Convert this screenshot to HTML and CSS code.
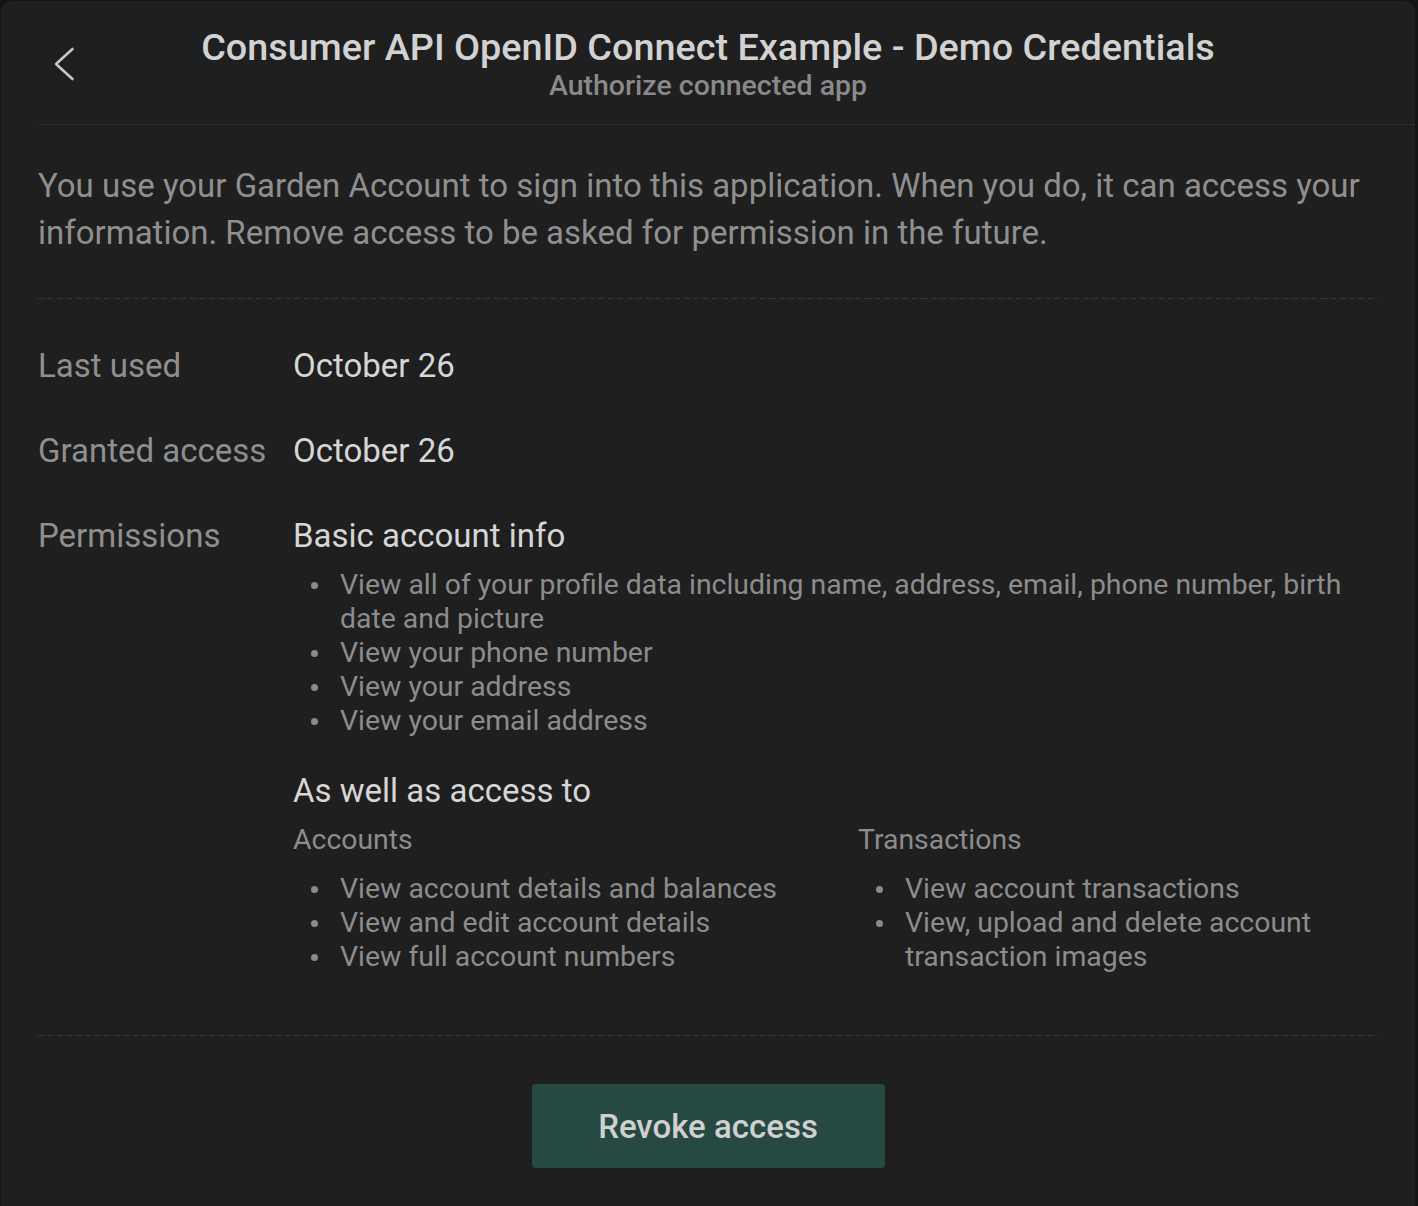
FILE: index.html
```html
<!DOCTYPE html>
<html lang="en">
<head>
<meta charset="utf-8">
<title>Authorize connected app</title>
<link rel="stylesheet" href="styles.css">
</head>
<body>
<div class="panel">
  <header class="header">
    <button class="back" aria-label="Back">
      <svg width="22" height="34" viewBox="0 0 22 34"><path d="M19.5 2 L3 17 L19.5 32" fill="none" stroke="#c8c8c8" stroke-width="2.6" stroke-linecap="round" stroke-linejoin="round"/></svg>
    </button>
    <div class="titles">
      <h1 class="title">Consumer API OpenID Connect Example - Demo Credentials</h1>
      <div class="subtitle">Authorize connected app</div>
    </div>
  </header>
  <main class="content">
    <p class="intro">You use your Garden Account to sign into this application. When you do, it can access your information. Remove access to be asked for permission in the future.</p>
    <hr class="dash">
    <div class="details">
      <div class="label">Last used</div>
      <div class="value">October 26</div>
      <div class="label">Granted access</div>
      <div class="value">October 26</div>
      <div class="label">Permissions</div>
      <div class="value perms">
        <div class="perm-title">Basic account info</div>
        <ul class="list">
          <li>View all of your profile data including name, address, email, phone number, birth date and picture</li>
          <li>View your phone number</li>
          <li>View your address</li>
          <li>View your email address</li>
        </ul>
        <div class="perm-title also">As well as access to</div>
        <div class="scopes">
          <div class="scope">
            <div class="scope-title">Accounts</div>
            <ul class="list">
              <li>View account details and balances</li>
              <li>View and edit account details</li>
              <li>View full account numbers</li>
            </ul>
          </div>
          <div class="scope">
            <div class="scope-title">Transactions</div>
            <ul class="list">
              <li>View account transactions</li>
              <li>View, upload and delete account transaction images</li>
            </ul>
          </div>
        </div>
      </div>
    </div>
    <hr class="dash dash-bottom">
    <div class="actions">
      <button class="revoke">Revoke access</button>
    </div>
  </main>
</div>
</body>
</html>
```
FILE: styles.css
```css
* { box-sizing: border-box; }
html, body { margin: 0; padding: 0; }
body {
  background: #121416;
  font-family: Roboto, "Noto Sans", sans-serif;
  color: #8c8c8c;
  padding: 1px 3px 0 1px;
  height: 1206px;
  overflow: hidden;
}
.panel {
  background: #1f1f1f;
  border-radius: 10px 10px 0 0;
  height: 1205px;
}
.header {
  display: flex;
  height: 124px;
  margin-left: 37px;
  border-bottom: 1px solid #2e2e2e;
  position: relative;
}
.back {
  position: absolute;
  left: 15px;
  top: 46px;
  background: none;
  border: 0;
  padding: 0;
  width: 22px;
  height: 34px;
}
.back svg { display: block; }
.titles {
  flex: 1;
  text-align: center;
  margin-left: -37px;
  padding-top: 24px;
}
.title {
  margin: 0;
  font-size: 37.8px;
  font-weight: 500;
  color: #d2d2d2;
  line-height: 44px;
}
.subtitle {
  font-size: 28.5px;
  font-weight: 500;
  color: #898989;
  line-height: 33px;
}
.content {
  padding: 0 37px;
}
.intro {
  margin: 0;
  padding-top: 37px;
  font-size: 33px;
  line-height: 47px;
  color: #8f8f8f;
}
.dash {
  border: 0;
  height: 1px;
  background: repeating-linear-gradient(to right, #363636 0 6px, transparent 6px 9.5px);
  margin: 42px 0 0;
}
.dash-bottom { margin-top: 61px; }
.details {
  display: grid;
  grid-template-columns: 255px 1fr;
  row-gap: 48px;
  padding-top: 48px;
}
.label {
  font-size: 33px;
  line-height: 37px;
  color: #8f8f8f;
}
.value {
  font-size: 33px;
  line-height: 37px;
  color: #d6d6d6;
}
.perm-title {
  font-size: 33px;
  line-height: 37px;
  color: #d6d6d6;
}
.list {
  list-style: none;
  margin: 14px 0 0;
  padding-left: 18px;
  font-size: 28.4px;
  line-height: 34px;
  color: #8c8c8c;
}
.list li {
  display: flex;
}
.list li::before {
  content: "";
  flex: none;
  width: 7px;
  height: 7px;
  border-radius: 50%;
  background: #8a8a8a;
  margin: 14px 22px 0 0;
}
.also { margin-top: 34px; }
.scopes {
  display: grid;
  grid-template-columns: 1fr 1fr;
  column-gap: 45px;
  margin-top: 15px;
}
.scope-title {
  font-size: 28.4px;
  line-height: 32px;
  color: #8c8c8c;
}
.scope .list { margin-top: 16px; }
.actions {
  display: flex;
  justify-content: center;
  padding-top: 48px;
}
.revoke {
  width: 353px;
  height: 84px;
  background: #264a43;
  border: 0;
  border-radius: 4px;
  font-family: Roboto, "Noto Sans", sans-serif;
  font-size: 33px;
  font-weight: 500;
  color: #d0d0d0;
}
```
